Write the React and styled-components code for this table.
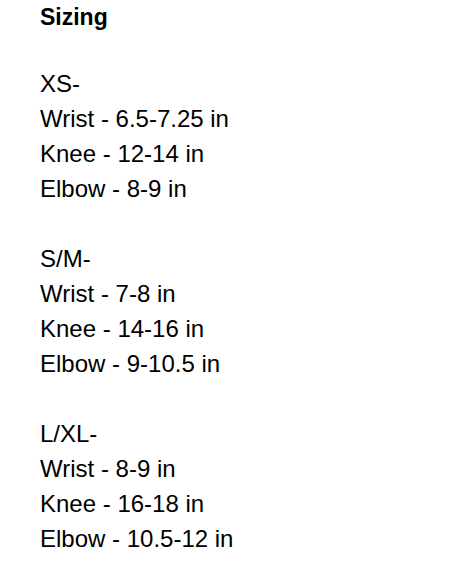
import React from "react";
import styled, { createGlobalStyle } from "styled-components";

const Global = createGlobalStyle`
  html, body { margin: 0; padding: 0; background: #ffffff; }
  body { font-family: "Liberation Sans", Arial, Helvetica, sans-serif; color: #000; }
`;

const Page = styled.div`
  padding: 0 0 0 40px;
  width: 474px;
  box-sizing: border-box;
`;

const Title = styled.h2`
  margin: 0 0 31px 0;
  font-size: 23px;
  font-weight: bold;
  line-height: 35px;
`;

const Group = styled.div`
  display: flex;
  flex-direction: column;
  margin-bottom: 35px;
`;

const Line = styled.div`
  font-size: 24px;
  line-height: 35px;
  white-space: nowrap;
`;

const sizes = [
  { name: "XS-", lines: ["Wrist - 6.5-7.25 in", "Knee - 12-14 in", "Elbow - 8-9 in"] },
  { name: "S/M-", lines: ["Wrist - 7-8 in", "Knee - 14-16 in", "Elbow - 9-10.5 in"] },
  { name: "L/XL-", lines: ["Wrist - 8-9 in", "Knee - 16-18 in", "Elbow - 10.5-12 in"] },
];

export default function App() {
  return (
    <>
      <Global />
      <Page>
        <Title>Sizing</Title>
        {sizes.map((s) => (
          <Group key={s.name}>
            <Line>{s.name}</Line>
            {s.lines.map((l) => (
              <Line key={l}>{l}</Line>
            ))}
          </Group>
        ))}
      </Page>
    </>
  );
}
